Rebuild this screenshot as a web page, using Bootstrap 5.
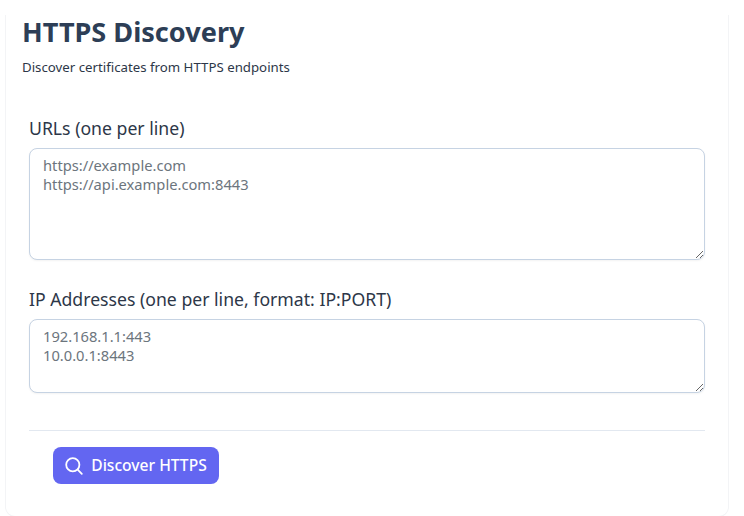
<!DOCTYPE html>
<html lang="en">
<head>
  <meta charset="UTF-8">
  <title>HTTPS Discovery</title>
  <meta name="viewport" content="width=device-width, initial-scale=1.0">
  <link href="https://cdn.jsdelivr.net/npm/bootstrap@5.3.3/dist/css/bootstrap.min.css" rel="stylesheet">
  <style>
    html, body {
      height: 516px;
      overflow: hidden;
    }
    body {
      background-color: #fff;
      font-family: "Noto Sans", "Lato", sans-serif;
      color: #2d3748;
    }
    .page-wrap {
      width: 724px;
      margin-left: 5px;
      margin-top: 18px;
      height: 502px;
      border-left: 1px solid #f3f4f6;
      border-right: 1px solid #f3f4f6;
      border-bottom: 1px solid #f3f4f6;
      border-radius: 0 0 10px 10px;
      padding: 0 23px 0 16px;
    }
    .page-title {
      font-size: 27.1px;
      font-weight: 700;
      line-height: 34px;
      margin: -3px 0 0;
      color: #2d3e56;
    }
    .page-sub {
      font-size: 13.25px;
      line-height: 20px;
      margin: 8px 0 0;
      color: #2d3748;
    }
    .form-area {
      padding-left: 7px;
      margin-top: 39px;
    }
    .field-label {
      font-size: 17.65px;
      line-height: 24px;
      font-weight: 400;
      margin-bottom: 8px;
      color: #2d3748;
    }
    .field-input {
      font-size: 14.7px;
      line-height: 19px;
      padding: 7px 13px;
      border: 1px solid #c6d3e3;
      border-radius: 8px;
      color: #2d3748;
      font-family: inherit;
      box-shadow: 0 1px 2px rgba(0, 0, 0, .05);
    }
    .field-input::placeholder {
      color: #6c757d;
      opacity: 1;
    }
    .urls-input { height: 112px; }
    .ips-input { height: 74px; }
    .form-gap { margin-top: 27px; }
    .form-rule {
      height: 1px;
      background: #e2e8f0;
      margin-top: 37px;
      margin-bottom: 16px;
    }
    .btn-discover {
      background: #6366f1;
      color: #fff;
      border: none;
      border-radius: 8px;
      width: 166px;
      height: 37px;
      margin-left: 24px;
      font-size: 15.6px;
      font-weight: 500;
      padding: 0;
    }
    .btn-discover:hover { background: #5558e3; color: #fff; }
  </style>
</head>
<body>
  <div class="page-wrap">
    <h1 class="page-title">HTTPS Discovery</h1>
    <p class="page-sub">Discover certificates from HTTPS endpoints</p>

    <form class="form-area">
      <label class="field-label d-block" for="urls">URLs (one per line)</label>
      <textarea id="urls" class="form-control field-input urls-input" placeholder="https://example.com&#10;https://api.example.com:8443"></textarea>

      <div class="form-gap">
        <label class="field-label d-block" for="ips">IP Addresses (one per line, format: IP:PORT)</label>
        <textarea id="ips" class="form-control field-input ips-input" placeholder="192.168.1.1:443&#10;10.0.0.1:8443"></textarea>
      </div>

      <div class="form-rule"></div>

      <button type="button" class="btn btn-discover d-inline-flex align-items-center justify-content-center gap-2">
        <svg width="18" height="18" viewBox="0 0 18 18" fill="none" stroke="currentColor" stroke-width="1.8" stroke-linecap="round"><circle cx="7.8" cy="7.8" r="6.6"/><path d="M12.7 12.7 16.8 16.8"/></svg>
        Discover HTTPS
      </button>
    </form>
  </div>
  <script src="https://cdn.jsdelivr.net/npm/bootstrap@5.3.3/dist/js/bootstrap.bundle.min.js"></script>
</body>
</html>
